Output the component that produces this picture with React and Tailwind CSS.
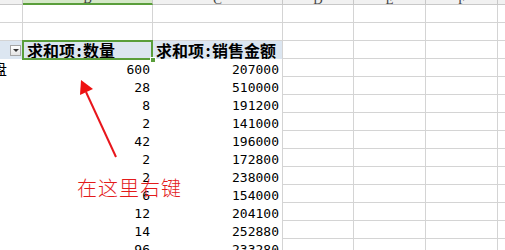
import React from 'react';

const COLS = [
  { key: 'A', w: 23 },
  { key: 'B', w: 130 },
  { key: 'C', w: 130 },
  { key: 'D', w: 71 },
  { key: 'E', w: 72 },
  { key: 'F', w: 72 },
  { key: 'G', w: 100 },
];

const ROWS = [
  ['600', '207000'],
  ['28', '510000'],
  ['8', '191200'],
  ['2', '141000'],
  ['42', '196000'],
  ['2', '172800'],
  ['2', '238000'],
  ['6', '154000'],
  ['12', '204100'],
  ['14', '252880'],
  ['96', '233280'],
];

const cjk = { fontFamily: '"SimSun","Noto Sans CJK SC",sans-serif' };
const num = { fontFamily: '"DejaVu Sans Mono",monospace' };

function GridCell({ w, className = '', children }) {
  return (
    <div
      className={`h-[18px] shrink-0 border-r border-b border-[#d4d4d4] ${className}`}
      style={{ width: w }}
    >
      {children}
    </div>
  );
}

function ColumnHeaders() {
  return (
    <div className="flex h-[19px]">
      {COLS.map(c => {
        const sel = c.key === 'B';
        return (
          <div
            key={c.key}
            className={`shrink-0 flex items-end justify-center border-r border-[#c8c8c8] text-[13px] leading-[8px] text-[#444] ${
              sel ? 'bg-[#d5e8c8] border-b-2 border-b-[#5a9e3b]' : 'bg-[#f1f1f1] border-b border-b-[#c8c8c8]'
            }`}
            style={{ width: c.w, fontFamily: '"Liberation Serif",serif' }}
          >
            {c.key === 'A' ? '' : c.key}
          </div>
        );
      })}
    </div>
  );
}

function EmptyRow() {
  return (
    <div className="flex">
      {COLS.map(c => (
        <GridCell key={c.key} w={c.w} />
      ))}
    </div>
  );
}

function PivotHeader() {
  return (
    <div className="flex">
      <div className="h-[18px] w-[23px] shrink-0 bg-[#dce6f1] flex items-center pl-[10px]">
        <div className="w-[11px] h-[11px] border border-[#a6a6a6] bg-gradient-to-b from-white to-[#e4e4e4] flex items-center justify-center">
          <div className="w-0 h-0 border-l-[3px] border-r-[3px] border-t-[3px] border-l-transparent border-r-transparent border-t-[#333]" />
        </div>
      </div>
      <div
        className="h-[18px] w-[130px] shrink-0 bg-[#dce6f1] flex items-center pl-[4px] text-[16px] font-bold text-black leading-none"
        style={cjk}
      >
        求和项<span className="inline-block w-[8px] text-center">:</span>数量
      </div>
      <div
        className="h-[18px] w-[130px] shrink-0 bg-[#dce6f1] border-r border-[#d4d4d4] flex items-center pl-[3px] text-[16px] font-bold text-black leading-none"
        style={cjk}
      >
        求和项<span className="inline-block w-[8px] text-center">:</span>销售金额
      </div>
      {COLS.slice(3).map(c => (
        <GridCell key={c.key} w={c.w} />
      ))}
    </div>
  );
}

function DataRow({ qty, amount, label }) {
  return (
    <div className="flex">
      <div className="h-[18px] w-[23px] shrink-0 flex items-center overflow-hidden">
        {label && (
          <span className="ml-[-8px] text-[15px] leading-none text-black" style={cjk}>
            {label}
          </span>
        )}
      </div>
      <div
        className="h-[18px] w-[130px] shrink-0 flex items-center justify-end pr-[3px] pt-[3px] text-[13px] text-black leading-none"
        style={num}
      >
        {qty}
      </div>
      <div
        className="h-[18px] w-[130px] shrink-0 border-r border-[#d4d4d4] flex items-center justify-end pr-[3px] pt-[3px] text-[13px] text-black leading-none"
        style={num}
      >
        {amount}
      </div>
      {COLS.slice(3).map(c => (
        <GridCell key={c.key} w={c.w} />
      ))}
    </div>
  );
}

export default function App() {
  return (
    <div className="relative w-[505px] h-[250px] overflow-hidden bg-white">
      <div className="mt-[-14px]">
        <ColumnHeaders />
        <EmptyRow />
        <EmptyRow />
        <PivotHeader />
        {ROWS.map(([q, a], i) => (
          <DataRow key={i} qty={q} amount={a} label={i === 0 ? '盘' : null} />
        ))}
      </div>

      {/* active cell outline + fill handle */}
      <div className="absolute left-[22px] top-[40px] w-[131px] h-[20px] border-2 border-[#5a9e3b] pointer-events-none" />
      <div className="absolute left-[150px] top-[57px] w-[6px] h-[6px] bg-[#5a9e3b] border border-white" />

      {/* annotation arrow */}
      <svg className="absolute left-0 top-0" width="505" height="250">
        <line x1="116" y1="157" x2="86" y2="92" stroke="#e8161c" strokeWidth="2" />
        <polygon points="81,80 93,89 80,95" fill="#ee1111" />
      </svg>

      <div
        className="absolute left-[77px] top-[178px] text-[20px] leading-none tracking-[1px] text-[#e31b1b] font-light"
        style={{ fontFamily: '"Noto Sans CJK SC",sans-serif' }}
      >
        在这里右键
      </div>
    </div>
  );
}
